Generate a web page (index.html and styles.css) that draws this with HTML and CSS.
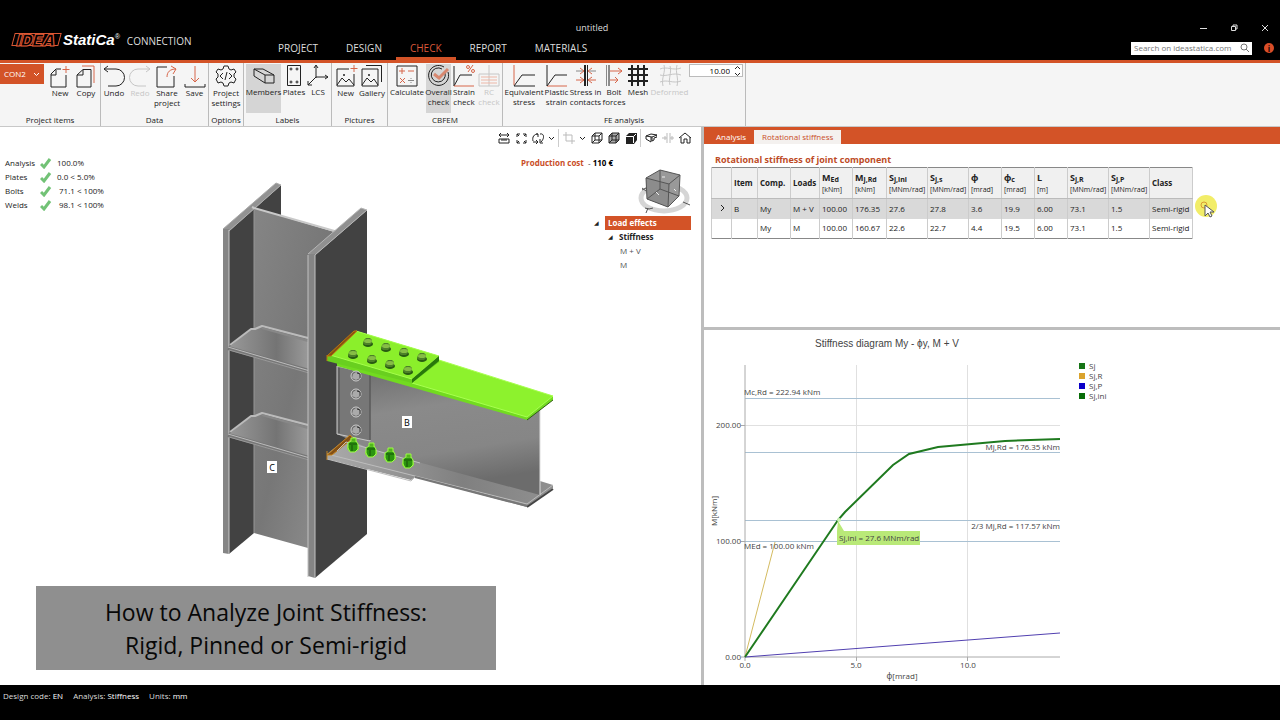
FILE: index.html
```html
<!DOCTYPE html>
<html lang="en">
<head>
<meta charset="utf-8">
<title>untitled - IDEA StatiCa Connection</title>
<link rel="stylesheet" href="styles.css">
</head>
<body>
<header class="titlebar">
  <div class="brand"><span class="brand-idea"><b>IDEA</b></span><span class="brand-statica">StatiCa<sup>®</sup></span><span class="brand-module">CONNECTION</span></div>
  <div class="doc-title">untitled</div>
  <div class="window-controls">
    <button aria-label="Minimize"><svg width="8" height="8"><path d="M1 4.500h7"/></svg></button>
    <button aria-label="Restore"><svg width="8" height="8"><path d="M1.500 2.500h4v4h-4zM3 2V1h4v4H6"/></svg></button>
    <button aria-label="Close"><svg width="8" height="8"><path d="M1 1l6 6M7 1l-6 6"/></svg></button>
  </div>
  <nav class="tabs"><a href="#project">PROJECT</a><a href="#design">DESIGN</a><a href="#check" class="active">CHECK</a><a href="#report">REPORT</a><a href="#materials">MATERIALS</a></nav>
  <div class="search-row">
    <label class="search"><input type="text" placeholder="Search on ideastatica.com" aria-label="Search on ideastatica.com"><svg width="10" height="10"><circle cx="4" cy="4" r="3"/><path d="M6 6l3 3"/></svg></label>
    <button class="info" aria-label="Information">i</button>
  </div>
</header>

<section class="ribbon">
  <div class="group g-items">
    <div class="tools">
      <button class="combo">CON2 <svg width="7" height="5"><path d="M1 1l2.500 2.500L6 1"/></svg></button>
      <button class="tool"><svg class="ic"><path d="M12 5H7l-5 5v13h15v-12M2 11h5V6"/><path class="o" d="M17 2v7M13.500 5.500h7"/></svg>New</button>
      <button class="tool"><svg class="ic"><path d="M8 5.500h8V23H2V11zM2 11h6V6"/><path class="o" d="M7 2h12v17"/></svg>Copy</button>
    </div><h2>Project items</h2>
  </div>
  <div class="group g-data">
    <div class="tools">
      <button class="tool"><svg class="ic"><path d="M5 2L1 5l4 3M1 5h12a8.500 8.500 0 0 1 0 17H5"/></svg>Undo</button>
      <button class="tool off"><svg class="ic"><path d="M17 2l4 3-4 3M21 5H9a8.500 8.500 0 0 0 0 17h8"/></svg>Redo</button>
      <button class="tool"><svg class="ic"><path d="M11 3H1v20h17V12"/><path class="o" d="M11 13c0-5 3-8 9-8M15 2l5 3-3 5"/></svg>Share<br>project</button>
      <button class="tool"><svg class="ic"><path d="M1 20v3h20v-3"/><path class="o" d="M11 2v16M7 14l4 4 4-4"/></svg>Save</button>
    </div><h2>Data</h2>
  </div>
  <div class="group g-options">
    <div class="tools">
      <button class="tool"><svg class="ic"><path d="M9 2h4l1 3 2 1 3-1 2 3-2 2v3l2 2-2 4-3-1-2 1-1 3H9l-1-3-2-1-3 1-2-4 2-2v-3L1 8l2-3 3 1 2-1zM8 9l-3 3 3 3M14 9l3 3-3 3M12 8l-2 8"/></svg>Project<br>settings</button>
    </div><h2>Options</h2>
  </div>
  <div class="group g-labels">
    <div class="tools tight">
      <button class="tool pressed"><svg class="ic"><path d="M1 5h9l11 6v8h-9L1 12zM1 5l11 6h9M12 11v8"/></svg>Members</button>
      <button class="tool"><svg class="ic"><path d="M4.500 1.500h13v20h-13z"/><circle cx="8" cy="5" r="1"/><circle cx="14" cy="5" r="1"/><circle cx="8" cy="18" r="1"/><circle cx="14" cy="18" r="1"/></svg>Plates</button>
      <button class="tool"><svg class="ic"><path d="M9 14V2M7 4l2-3 2 3M9 13h12M18 11l3 2-3 2M9 13l-8 8M1 17v4h4"/></svg>LCS</button>
    </div><h2>Labels</h2>
  </div>
  <div class="group g-pictures">
    <div class="tools">
      <button class="tool"><svg class="ic"><path d="M14 5H2v17h17V10M2 21l5-7 4 4 3-3 5 6"/><circle class="fill" cx="9" cy="11" r="1"/><path class="o" d="M19 1v7M15.500 4.500h7"/></svg>New</button>
      <button class="tool"><svg class="ic"><path d="M1 5h16v17H1zM1 21l5-7 4 4 3-3 4 6M5 1.500h15.500V18"/><circle class="fill" cx="8" cy="11" r="1"/></svg>Gallery</button>
    </div><h2>Pictures</h2>
  </div>
  <div class="group g-cbfem">
    <div class="tools tight">
      <button class="tool"><svg class="ic"><path d="M1 2h20v20H1z"/><path class="o" d="M3 7h6M6 4v6M12 7h6M4 14l5 5M9 14l-5 5"/><path class="g" d="M12 16.500h6M15 14v1M15 18v1"/></svg>Calculate</button>
      <button class="tool pressed"><svg class="ic"><path d="M20 8a10 10 0 1 1-4-5M17 9a7 7 0 1 1-3-4"/><path class="o wide" d="M6 10l5 4 9-9"/></svg>Overall<br>check</button>
      <button class="tool"><svg class="ic"><path d="M1 2v20l6-11h12"/><path class="o" d="M1 22h20M20 1l-5 7"/><circle class="o" cx="15" cy="3" r="1.500"/><circle class="o" cx="20" cy="7" r="1.500"/></svg>Strain<br>check</button>
      <button class="tool off"><svg class="ic"><path d="M1 10h20v12H1zM11 1v21"/><path class="o" d="M3 13h16M3 16h16M3 19h16"/></svg>RC<br>check</button>
    </div><h2>CBFEM</h2>
  </div>
  <div class="group g-fe">
    <div class="tools tight">
      <button class="tool"><svg class="ic"><path class="o" d="M1 1v20"/><path d="M1 22l8-11h13M1 22h21"/></svg>Equivalent<br>stress</button>
      <button class="tool"><svg class="ic"><path class="o" d="M1 22h20"/><path d="M1 1v21l8-11h12"/></svg>Plastic<br>strain</button>
      <button class="tool"><svg class="ic"><path d="M9.500 1v21M10.500 1v21M12.500 1v21"/><path class="g" d="M1 7h7M21 7h-7"/><path class="o" d="M1 16h8M21 16h-8M5 4l4 3-4 3M17 4l-4 3 4 3M5 13l4 3-4 3M17 13l-4 3 4 3"/></svg>Stress in<br>contacts</button>
      <button class="tool"><svg class="ic"><path class="g" d="M3.500 1v21"/><path d="M6 1v21"/><path class="o" d="M7 7h12M15 4l4 3-4 3M7 16h8M12 13l3 3-3 3"/></svg>Bolt<br>forces</button>
      <button class="tool"><svg class="ic"><path class="heavy" d="M5 1v21M11 1v21M17 1v21M1 5h20M1 11h20M1 17h20"/></svg>Mesh</button>
      <button class="tool off"><svg class="ic"><path d="M5 1c2 7-3 13-1 21M11 2c2 7-2 12 0 19M18 1c-2 8 2 13 0 21M1 5c7-3 13 2 21-1M1 11c7 2 13-3 21 0M1 18c7-3 13 2 21-1"/></svg>Deformed</button>
      <label class="spin"><input type="text" value="10.00" aria-label="Deformation scale"><svg width="9" height="12"><path d="M2 4l2.500-2.500L7 4M2 8l2.500 2.500L7 8"/></svg></label>
    </div><h2>FE analysis</h2>
  </div>
</section>

<main class="workspace">
  <section class="viewport">
    <svg class="scene" viewBox="0 127 701 558" preserveAspectRatio="xMinYMin meet">
      <defs>
        <linearGradient id="web" x1="0" y1="0" x2="1" y2="1"><stop offset="0" stop-color="#858585"/><stop offset=".5" stop-color="#777"/><stop offset="1" stop-color="#929292"/></linearGradient>
        <linearGradient id="stiff" x1="0" y1="0" x2="1" y2="0"><stop offset="0" stop-color="#999"/><stop offset=".6" stop-color="#747474"/><stop offset="1" stop-color="#999"/></linearGradient>
        <linearGradient id="beam" x1="0" y1="0" x2=".25" y2="1"><stop offset="0" stop-color="#6a6a6a"/><stop offset=".4" stop-color="#8a8a8a"/><stop offset=".75" stop-color="#868686"/><stop offset="1" stop-color="#6c6c6c"/></linearGradient>
        <linearGradient id="flange" x1="0" y1="0" x2="1" y2="0"><stop offset="0" stop-color="#aaa"/><stop offset=".6" stop-color="#808080"/><stop offset="1" stop-color="#909090"/></linearGradient>
        <g id="bolt-top"><ellipse cy="2" rx="5" ry="3" fill="#285b12"/><path d="M-4-2L-2-4H2L4-2V1L2 3H-3L-5 1z" fill="#4c8028"/><ellipse cy="-1" rx="4" ry="2" fill="#86bd45"/></g>
        <g id="bolt-web"><circle r="5" fill="#666" stroke="#d0d0d0"/><path d="M-3-2l3-2 4 2v4L0 4-4 2z" fill="#aaa"/><path d="M1-3l3 1v4" stroke="#333"/></g>
        <g id="bolt-bottom"><ellipse cy="3" rx="6" ry="4" fill="#84df31"/><path d="M-5-2L-2-4H3L5-1V4L2 7H-3L-5 3z" fill="#2c9410" stroke="#9fff47"/><path d="M-2-4v-3h5v4" fill="#52b51e" stroke="#9cfc44"/><path d="M-4-1h8M-1 0v6" stroke="#145009"/></g>
      </defs>
      <g stroke-linejoin="round">
        <path d="M229 231L281 185V300L254 533L229 554z" fill="#424242"/>
        <path d="M223 229L276 183L281 185L229 231z" fill="#929292" stroke="#aaa"/>
        <path d="M223 229h6v325l-6-1z" fill="#858585"/>
        <path d="M254 208L338 233L308 256V548L254 533z" fill="url(#web)"/>
        <path d="M252 207L254 208L338 232" stroke="#c9c9c9" stroke-width="2"/>
        <path d="M229 230V554" stroke="#cbcbcb"/>
        <path d="M254 210V533" stroke="#969696"/>
        <g id="stiffener"><path d="M229 347L251 329H254L262 327L308 340V370z" fill="url(#stiff)"/><path d="M230 345L251 329H255L262 326L308 338" stroke="#bbb" stroke-width="2"/><path d="M262 328L308 341" stroke="#888" stroke-width="2"/><path d="M228 348L309 371" stroke="#777" stroke-width="4"/><path d="M228 347L310 371" stroke="#bbb"/><path d="M229 350L309 373" stroke="#999"/></g>
        <use href="#stiffener" y="87"/>
        <path d="M315 255L367 210V534L315 578z" fill="#424242"/>
        <path d="M308 254L361 208L367 210L315 255z" fill="#909090" stroke="#b5b5b5"/>
        <path d="M308 254h7v324l-7-2z" fill="#858585"/>
        <path d="M308 255V577M315 255V578" stroke="#c1c1c1"/>
        <path d="M327 454L347 438L540 481L553 485V488L527 507L415 477L411 480L327 459z" fill="url(#flange)"/>
        <path d="M327 454L527 504L553 485M327 459L411 481L415 477" stroke="#bdbdbd"/>
        <path d="M527 507L553 489" stroke="#444" stroke-width="2"/>
        <path d="M415 477L527 506" stroke="#777" stroke-width="2"/>
        <path d="M337 366L440 386L540 410V495L370 449L337 434z" fill="url(#beam)"/>
        <path d="M540 408V495" stroke="#ddd"/>
        <path d="M337 366L370 374V441L337 434z" fill="#777" stroke="#c8c8c8"/>
        <path d="M370 375V440" stroke="#222"/>
        <path d="M339 368V433" stroke="#4b4b4b"/>
        <path d="M327 455L350 435L353 438L332 455zM327 451v9" fill="#845015" stroke="#c4831f"/>
        <path d="M337 451L346 442L420 463" stroke="#c0c0c0"/>
        <path d="M337 362L440 362L553 396V400L527 420L337 366z" fill="#72db20"/>
        <path d="M412 383L439 360L553 396L527 417z" fill="#8df22d" stroke="#a8ff50"/>
        <path d="M527 420L553 400" stroke="#315d14"/>
        <path d="M327 356L356 331L439 356V362L412 383L327 361z" fill="#69cf1f"/>
        <path d="M330 355L356 331L439 356L412 379z" fill="#8bef2b" stroke="#a5ff4b"/>
        <path d="M412 383L439 361V356L412 379z" fill="#28780b"/>
        <path d="M327 356L354 331L357 331L331 356zM327 355v6" fill="#865013" stroke="#bd750d"/>
      </g>
      <use href="#bolt-top" x="368" y="342"/><use href="#bolt-top" x="386" y="347"/><use href="#bolt-top" x="404" y="352"/><use href="#bolt-top" x="422" y="357"/><use href="#bolt-top" x="353" y="354"/><use href="#bolt-top" x="372" y="359"/><use href="#bolt-top" x="390" y="364"/><use href="#bolt-top" x="408" y="370"/>
      <use href="#bolt-web" x="356" y="376"/><use href="#bolt-web" x="356" y="394"/><use href="#bolt-web" x="356" y="412"/><use href="#bolt-web" x="356" y="430"/>
      <use href="#bolt-bottom" x="353" y="445"/><use href="#bolt-bottom" x="371" y="450"/><use href="#bolt-bottom" x="390" y="455"/><use href="#bolt-bottom" x="408" y="461"/>
      <g class="member-tag"><rect x="267" y="461" width="10" height="12"/><text x="272" y="471">C</text><rect x="402" y="416" width="10" height="12"/><text x="407" y="426">B</text></g>
    </svg>

    <dl class="results">
      <dt>Analysis</dt><dd><svg width="12" height="11"><path d="M1 6l3 3 6-8"/></svg></dd><dd>100.0%</dd>
      <dt>Plates</dt><dd><svg width="12" height="11"><path d="M1 6l3 3 6-8"/></svg></dd><dd>0.0 &lt; 5.0%</dd>
      <dt>Bolts</dt><dd><svg width="12" height="11"><path d="M1 6l3 3 6-8"/></svg></dd><dd class="in">71.1 &lt; 100%</dd>
      <dt>Welds</dt><dd><svg width="12" height="11"><path d="M1 6l3 3 6-8"/></svg></dd><dd class="in">98.1 &lt; 100%</dd>
    </dl>

    <div class="view-side">
      <div class="view-tools">
        <button aria-label="Dimensions"><svg class="vi"><path d="M1 3h10M3 1L1 3l2 2M9 1l2 2-2 2M1 7h10v4H1zM4 7v2M6 7v2M8 7v2"/></svg></button>
        <button aria-label="Fit"><svg class="vi"><path d="M2 5V2h3M8 2h3v3M11 8v3H8M5 11H2V8M2 2l2 2M11 2L9 4M11 11L9 9M2 11l2-2"/></svg></button>
        <button aria-label="Rotate"><svg class="vi"><path d="M1 9C0 5 2 2 6 2H4M6 2v3M8 2c4-1 5 4 1 8M8 7v4h3M1 10h5M4 8l2 2-2 2"/></svg></button>
        <button class="chev" aria-label="Rotate options"><svg width="7" height="5"><path d="M1 1l2.500 2.500L6 1"/></svg></button>
        <i></i>
        <button class="faint" aria-label="Crop"><svg class="vi"><path d="M3 0v9h9M0 3h9v9"/></svg></button>
        <button class="chev" aria-label="Crop options"><svg width="7" height="5"><path d="M1 1l2.500 2.500L6 1"/></svg></button>
        <button aria-label="Wireframe"><svg class="vi"><path d="M1 4l3-3h7v7l-3 3H1zM1 4h7v7M8 4l3-3M4 1v7h7M4 8l-3 3"/></svg></button>
        <button aria-label="Transparent"><svg class="vi"><path class="shade" d="M1 4l3-3h7v7l-3 3H1z"/><path d="M1 4h7v7M8 4l3-3M4 1v7h7M4 8l-3 3"/></svg></button>
        <button aria-label="Solid"><svg class="vi"><path class="fill" d="M1 4l3-3h8v7l-3 4H1z"/><path class="white" d="M1 4.500h7.500V11M8.500 4.500L11 2"/></svg></button>
        <i></i>
        <button aria-label="Members"><svg class="vi"><path d="M1 4l5-2 6 1-5 2zM1 4v3l5 3V5M7 5v4l2-1V6l3-1V3"/></svg></button>
        <button class="faint" aria-label="Section"><svg class="vi"><path d="M5 1v10M8 1v10M0 6h5M8 6h4M3 4v4M10 4v4"/></svg></button>
        <button aria-label="Home"><svg class="vi"><path d="M0 6l6-5 6 5M2 5v6h3V7h3v4h3V5"/></svg></button>
      </div>
      <p class="cost"><b>Production cost</b>&nbsp; - <strong>110 €</strong></p>
      <svg class="navcube" viewBox="636 166 56 48" width="56" height="48">
        <ellipse cx="664" cy="196" rx="23" ry="13" stroke="#d5d5d5" stroke-width="5"/>
        <path d="M646 176L660 168L680 173L679 194L668 205L647 197z" fill="#999"/>
        <path d="M646 176L669 182L668 205L647 197z" fill="#8c8c8c"/>
        <path d="M646 176L669 182L680 173L660 168zM646 176L647 197L668 205L669 182M680 173L679 194L668 205M660 168V187L647 197M660 187L679 194" stroke="#555"/>
        <path d="M642 188l4-2M642 186l4 3M645 206l4 1 4-1M648 206l-2 5M683 200l7 3" stroke="#555"/>
        <path d="M662 175h3M674 187l2 2M656 190l3 3" stroke="#eee"/>
      </svg>
      <ul class="tree">
        <li class="root"><span class="tri">◢</span><b>Load effects</b></li>
        <li class="branch"><span class="tri">◢</span><b>Stiffness</b></li>
        <li class="leaf">M + V</li>
        <li class="leaf">M</li>
      </ul>
    </div>
    <p class="caption">How to Analyze Joint Stiffness:<br>Rigid, Pinned or Semi-rigid</p>
  </section>

  <section class="details">
    <div class="table-pane">
      <div class="subtabs"><button>Analysis</button><button class="active">Rotational stiffness</button></div>
      <h1>Rotational stiffness of joint component</h1>
      <table>
        <colgroup><col class="c20"><col class="c26"><col class="c33"><col class="c29"><col class="c33"><col class="c34"><col class="c41"><col class="c41"><col class="c33"><col class="c33"><col class="c33"><col class="c41"><col class="c41"><col class="c43"></colgroup>
        <thead><tr><th></th><th>Item</th><th>Comp.</th><th>Loads</th><th><em>M<sub>Ed</sub></em><small>[kNm]</small></th><th><em>M<sub>j,Rd</sub></em><small>[kNm]</small></th><th><em>S<sub>j,ini</sub></em><small>[MNm/rad]</small></th><th><em>S<sub>j,s</sub></em><small>[MNm/rad]</small></th><th><em>ϕ</em><small>[mrad]</small></th><th><em>ϕ<sub>c</sub></em><small>[mrad]</small></th><th><em>L</em><small>[m]</small></th><th><em>S<sub>j,R</sub></em><small>[MNm/rad]</small></th><th><em>S<sub>j,P</sub></em><small>[MNm/rad]</small></th><th>Class</th></tr></thead>
        <tbody>
          <tr class="selected"><td class="mark"><svg width="6" height="8"><path d="M1 1l3 3-3 3"/></svg></td><td>B</td><td>My</td><td>M + V</td><td>100.00</td><td>176.35</td><td>27.6</td><td>27.8</td><td>3.6</td><td>19.9</td><td>6.00</td><td>73.1</td><td>1.5</td><td>Semi-rigid</td></tr>
          <tr><td></td><td></td><td>My</td><td>M</td><td>100.00</td><td>160.67</td><td>22.6</td><td>22.7</td><td>4.4</td><td>19.5</td><td>6.00</td><td>73.1</td><td>1.5</td><td>Semi-rigid</td></tr>
        </tbody>
      </table>
      <svg class="pointer" width="28" height="28"><circle cx="12" cy="12" r="11"/><circle class="ring" cx="10" cy="11" r="3"/><path d="M11 11v11l3-3 2 4 2-1-2-4h4z"/></svg>
    </div>
    <div class="chart-pane">
      <svg class="chart" viewBox="704 330 576 355" preserveAspectRatio="xMinYMin meet">
        <text class="chart-title" x="887" y="347" text-anchor="middle">Stiffness diagram My - ϕy, M + V</text>
        <path class="grid" d="M856.500 365V657M967.500 365V657M745 425.500H1060"/>
        <path class="limit" d="M745 398.500H1060M745 452.500H1060M745 520.500H1060M745 541.500H1060"/>
        <path class="axis" d="M745 365V657H1060M741 425.500h4M741 541.500h4M741 657h4M856.500 657v4M967.500 657v4M745 657v4"/>
        <path class="s-r" d="M745 657L775 542"/>
        <path class="s-p" d="M745 657L1060 633"/>
        <path class="s-j" d="M745 657L838 520L845 512L893 465L909 454L938 447L1005 441L1060 439"/>
        <text x="744" y="395">Mc,Rd = 222.94 kNm</text>
        <text x="1060" y="450" text-anchor="end">Mj,Rd = 176.35 kNm</text>
        <text x="1060" y="529" text-anchor="end">2/3 Mj,Rd = 117.57 kNm</text>
        <text x="744" y="549">MEd = 100.00 kNm</text>
        <path d="M837 531L838 521L844 531H920V545H837z" fill="#b9e978"/>
        <circle cx="839" cy="520" r="2" fill="#c8f3b0"/>
        <text x="839" y="541">Sj,ini = 27.6 MNm/rad</text>
        <g text-anchor="end"><text x="741" y="428">200.00</text><text x="741" y="544">100.00</text><text x="741" y="660">0.00</text></g>
        <g text-anchor="middle"><text x="745" y="668">0.0</text><text x="856" y="668">5.0</text><text x="968" y="668">10.0</text><text x="902" y="679">ϕ[mrad]</text><text transform="translate(717 511) rotate(-90)">M[kNm]</text></g>
        <rect x="1079" y="363" width="6" height="6" fill="#167416"/><rect x="1079" y="373" width="6" height="6" fill="#daa32d"/><rect x="1079" y="383" width="6" height="6" fill="#0b00c8"/><rect x="1079" y="393" width="6" height="6" fill="#086c08"/>
        <text x="1089" y="369">Sj</text><text x="1089" y="379">Sj,R</text><text x="1089" y="389">Sj,P</text><text x="1089" y="399">Sj,ini</text>
      </svg>
    </div>
  </section>
</main>
<footer class="status"><span>Design code: <b>EN</b></span><span>Analysis: <b>Stiffness</b></span><span>Units: <b>mm</b></span></footer>
</body>
</html>
```
FILE: styles.css
```css
* { box-sizing: border-box; }
body { margin: 0; min-height: 100vh; display: flex; flex-direction: column; font: 8px/10px "Open Sans", "Noto Sans", sans-serif; color: #222; background: #000; }
button { font: inherit; color: inherit; border: 0; background: none; padding: 0; margin: 0; }
svg { fill: none; stroke: currentColor; flex: none; }
svg text { stroke: none; fill: #444; }
h1, h2, p, ul, dl, dd { margin: 0; padding: 0; }

.titlebar { display: grid; grid-template-columns: 264px 1fr 360px; grid-template-rows: 36px 24px; background: #000; color: #ddd; border-bottom: 3px solid #d35327; }
.brand { grid-row: 1 / 3; display: flex; align-items: center; padding: 19px 0 0 13px; }
.brand-idea { width: 47px; height: 13px; border: 1px solid #dc5835; transform: skewX(-15deg); display: flex; align-items: center; justify-content: center; color: #000; -webkit-text-stroke: 1px #e55d38; font: 900 16px/12px Inter, sans-serif; }
.brand-statica { margin-left: 3px; color: #fff; font: italic bold 15px/16px "Liberation Sans", sans-serif; }
.brand-statica sup { font-size: 7px; font-weight: normal; line-height: 6px; vertical-align: 6px; }
.brand-module { margin-left: 7px; padding-top: 3px; font-size: 10px; }
.doc-title { text-align: center; font-size: 9px; padding-top: 23px; }
.window-controls { display: flex; justify-content: flex-end; gap: 23px; padding: 24px 11px 0 0; align-items: flex-start; }
.window-controls button { display: flex; width: 8px; }
.tabs { display: flex; font-size: 10px; line-height: 20px; }
.tabs a { padding: 2px 14px 0; color: inherit; text-decoration: none; border-bottom: 3px solid transparent; }
.tabs .active { color: #db583a; border-color: #d35327; }
.search-row { display: flex; justify-content: flex-end; align-items: center; gap: 12px; padding: 0 6px 0 0; }
.search { display: flex; align-items: center; width: 121px; height: 13px; background: #fff; color: #777; padding-right: 2px; }
.search input { flex: 1; min-width: 0; border: 0; padding: 0 3px; background: none; font: inherit; outline: 0; }
.search input::placeholder { color: #777; opacity: 1; }
.info { width: 10px; height: 10px; border-radius: 50%; background: #da4e28; color: #220500; font-weight: bold; line-height: 9px; }

.ribbon { display: flex; background: #f5f5f5; border-bottom: 1px solid #c8c8c8; height: 64px; }
.group { display: flex; flex-direction: column; justify-content: space-between; border-right: 1px solid #bbb; padding: 1px 0; }
.group h2 { font: inherit; text-align: center; }
.tools { display: grid; align-items: start; }
.g-items { width: 101px; } .g-items .tools { grid-template-columns: 47px 26px 26px; }
.g-data { width: 108px; } .g-data .tools { grid-template-columns: 26px 26px 28px 27px; }
.g-options { width: 35px; }
.g-labels { width: 88px; } .g-labels .tools { grid-template-columns: 35px 26px 22px; padding-left: 2px; }
.g-pictures { width: 56px; } .g-pictures .tools { grid-template-columns: 27px 26px; }
.g-cbfem { width: 115px; } .g-cbfem .tools { grid-template-columns: 38px 25px 26px 24px; }
.g-fe { width: 243px; } .g-fe .tools { grid-template-columns: 40px 25px 33px 24px 24px 39px 54px; padding-left: 1px; }
.combo { background: #d35327; color: #fff; width: 44px; height: 20px; display: flex; justify-content: space-between; align-items: center; padding: 0 4px; }
.tool { display: flex; flex-direction: column; align-items: center; white-space: nowrap; min-height: 49px; text-align: center; }
.ic { width: 22px; height: 24px; overflow: visible; }
.tight .ic { margin-bottom: -1px; }
.o { stroke: #d7664a; }
.g { stroke: #888; }
.wide { stroke-width: 3; stroke: #d88870; }
.heavy { stroke-width: 2; }
.fill { fill: currentColor; stroke: none; }
.shade { fill: #aaa; }
.white { stroke: #fff; }
.tool.off { color: #c6c6c6; }
.off .o { stroke: #edb7a7; }
.pressed { background: #d5d5d5; }
.spin { display: flex; align-items: center; background: #fff; border: 1px solid #bbb; height: 13px; }
.spin input { min-width: 0; flex: 1; border: 0; padding: 0 3px; text-align: right; font: inherit; background: none; outline: 0; }

.workspace { flex: 1; display: grid; grid-template-columns: 701fr 576fr; column-gap: 3px; background: #bdbdbd; }
.viewport { position: relative; background: #fff; display: flex; justify-content: space-between; align-items: flex-start; overflow: hidden; }
.scene, .navcube, .chart { stroke: none; }
.scene { position: absolute; inset: 0; width: 100%; height: 100%; }
.member-tag rect { fill: #fff; }
.member-tag text { font-size: 9px; text-anchor: middle; fill: #000; }
.results { position: relative; display: grid; grid-template-columns: 35px 17px auto; grid-auto-rows: 14px; align-items: center; padding: 29px 0 0 5px; }
.results svg { display: block; color: #72c276; stroke-width: 3; }
.in { padding-left: 2px; }
.view-side { position: relative; display: flex; flex-direction: column; align-items: flex-end; padding: 2px 8px 0 0; }
.view-tools { display: flex; height: 18px; align-items: center; color: #222; }
.view-tools button { width: 17px; display: flex; justify-content: center; }
.view-tools .chev { width: 11px; }
.view-tools i { width: 1px; height: 18px; margin: 0 1px; background: #ccc; }
.view-tools .faint { color: #bbb; }
.vi { width: 12px; height: 12px; }
.cost { padding: 11px 80px 0 0; }
.cost b { color: #c94d27; }
.cost strong { color: #000; }
.navcube { margin-right: 1px; }
.tree { list-style: none; width: 97px; margin-right: 2px; }
.tree li { display: flex; align-items: center; height: 14px; }
.tri { font: 6px/8px "DejaVu Sans", sans-serif; width: 11px; }
.tree .root b { flex: 1; background: #d35327; color: #fff; line-height: 14px; padding-left: 3px; }
.tree .branch { padding-left: 14px; }
.tree .leaf { padding-left: 26px; color: #555; }
.caption { position: absolute; left: 36px; bottom: 15px; width: 460px; padding: 10px 0 8px; background: #8f8f8f; color: #080808; font-size: 23px; line-height: 33px; text-align: center; }

.details { display: flex; flex-direction: column; gap: 3px; min-width: 0; }
.table-pane { position: relative; height: 200px; background: #fff; }
.subtabs { display: flex; background: #d35327; height: 17px; padding: 3px 0 0 4px; }
.subtabs button { color: #fff; padding: 0 8px; }
.subtabs .active { background: #f4f1ef; color: #c94d27; }
h1 { color: #bd4b26; font-size: 9px; line-height: 12px; padding: 10px 0 0 11px; }
table { margin: 1px 0 0 7px; border-collapse: collapse; table-layout: fixed; width: 481px; border: 1px solid #888; white-space: nowrap; }
th, td { border-left: 1px solid #ccc; border-right: 1px solid #ccc; padding: 0 0 0 2px; text-align: left; }
th { height: 31px; background: #f0f0f0; border-bottom: 1px solid #bbb; }
th em { display: block; font-style: normal; font-size: 9px; line-height: 13px; }
th small { display: block; font-size: 7px; font-weight: normal; line-height: 11px; }
sub { font-size: 7px; line-height: 0; vertical-align: -1px; }
td { height: 20px; }
.selected { background: #d9d9d9; }
.mark { text-align: center; }
.c20 { width: 20px; } .c26 { width: 26px; } .c29 { width: 29px; } .c33 { width: 33px; } .c34 { width: 34px; } .c41 { width: 41px; } .c43 { width: 43px; }
.pointer { position: absolute; left: 490px; top: 67px; }
.pointer circle { fill: #f2ed68; stroke: none; }
.pointer .ring { fill: none; stroke: #d99b32; }
.pointer path { fill: #fff; stroke: #555; }
.chart-pane { flex: 1; background: #fff; min-height: 355px; }
.chart { display: block; width: 100%; }
.chart text { font-size: 8px; }
.chart .chart-title { font: 10px "Liberation Sans", sans-serif; }
.grid { stroke: #e0e0e0; }
.limit { stroke: #a9c1d3; }
.axis { stroke: #aaa; }
.s-r { stroke: #d4bb61; }
.s-p { stroke: #5140b0; }
.s-j { stroke: #1f7a1f; stroke-width: 2; }
.status { height: 35px; display: flex; gap: 10px; padding: 6px 3px; color: #ddd; background: #000; }
.status b { font-weight: normal; color: #fff; }
```
